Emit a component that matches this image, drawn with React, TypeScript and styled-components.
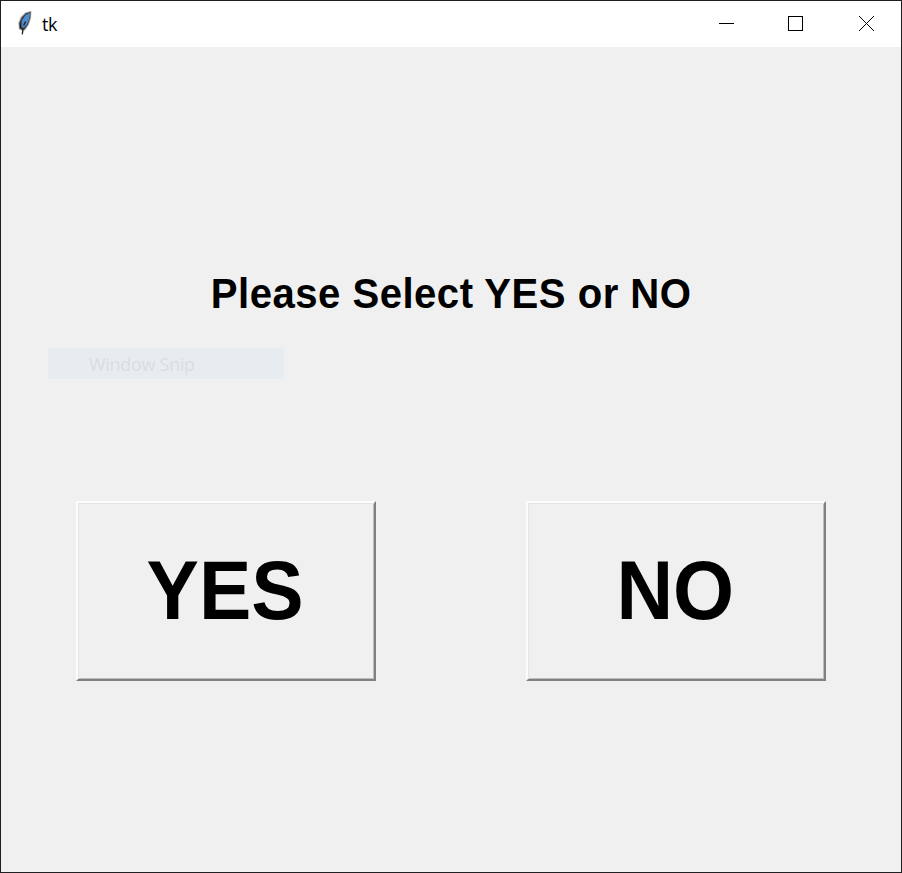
import React from "react";
import styled, { createGlobalStyle } from "styled-components";

const GlobalStyle = createGlobalStyle`
  * { box-sizing: border-box; }
  body { margin: 0; background: #202022; }
`;

const Window = styled.div`
  position: relative;
  display: flex;
  flex-direction: column;
  width: 902px;
  height: 873px;
  border: 1px solid #1f1f22;
  background: #f0f0f0;
  overflow: hidden;
`;

const TitleBar = styled.header`
  display: flex;
  align-items: center;
  height: 46px;
  flex: none;
  background: #fff;
`;

const Feather = styled.svg`
  width: 16px;
  height: 26px;
  margin: 0 9px 2px 16px;
  flex: none;
`;

const Title = styled.span`
  flex: 1;
  font: 18px/24px "Open Sans", "Noto Sans", sans-serif;
  letter-spacing: -0.3px;
  color: #000;
`;

const WindowControl = styled.button`
  display: flex;
  align-items: center;
  justify-content: center;
  width: 70px;
  height: 46px;
  padding: 0;
  border: 0;
  background: transparent;
`;

const ControlIcon = styled.svg`
  width: 16px;
  height: 16px;
  fill: none;
  stroke: #000;
`;

const Content = styled.main`
  display: flex;
  flex-direction: column;
  align-items: center;
  padding-top: 223px;
`;

const Heading = styled.h1`
  margin: 0;
  font: bold 42px/48px "Liberation Sans", Arial, sans-serif;
  letter-spacing: 0.5px;
  white-space: nowrap;
  color: #000;
  transform: translateX(0.5px) scaleX(0.955);
`;

const Choices = styled.div`
  display: flex;
  gap: 150px;
  margin-top: 183px;
`;

const Choice = styled.button`
  display: flex;
  align-items: center;
  justify-content: center;
  width: 300px;
  height: 180px;
  padding: 0 0 1px 0;
  border: solid;
  border-width: 2px;
  border-color: #fcfcfc #808080 #808080 #fcfcfc;
  background: #f0f0f0;
  box-shadow: inset 1px 1px #e5e5e5, inset -1px -1px #bdbdbd;
  font: bold 83px/96px "Liberation Sans", Arial, sans-serif;
  color: #000;
`;

const ChoiceLabel = styled.span`
  transform: translateX(-1px) scaleX(0.945);
`;

const SnipHint = styled.div`
  position: absolute;
  left: 47px;
  top: 347px;
  width: 236px;
  height: 31px;
  padding-left: 41px;
  background: #e7ecf0;
  font: 18px/33px "Open Sans", "Noto Sans", sans-serif;
  letter-spacing: -0.3px;
  color: #dcdddf;
`;

export default function App() {
  return (
    <>
      <GlobalStyle />
      <Window>
        <TitleBar>
          <Feather viewBox="0 0 16 26">
            <path d="M5 24 5.3 20.5 2 19.5 1.2 13 3.6 7 8 2.6 14.4 .8 14.2 8 12 14.5 8.5 20 6.5 21Z" fill="#b9b7b2" />
            <path d="M5.2 20 2.6 18.8 2.2 13 4.6 7.5 8.7 3.3 13.7 1.8 13.2 8 11 14.5 7.5 19.5Z" fill="#3b4046" />
            <path d="M4.2 16 5.2 10 8.7 5 12.9 2.7 12.3 8.5 10.2 13.8 6.7 18Z" fill="#4f8bd0" />
            <path d="M5.3 24.3 6 18.5M3.6 18V13.5M6.6 15.5 8.6 11.5" fill="none" stroke="#1a1d22" strokeWidth="1.3" />
          </Feather>
          <Title>tk</Title>
          <WindowControl aria-label="Minimize">
            <ControlIcon viewBox="0 0 16 16" shapeRendering="crispEdges">
              <path d="M1 7.5H16" />
            </ControlIcon>
          </WindowControl>
          <WindowControl aria-label="Maximize">
            <ControlIcon viewBox="0 0 16 16" shapeRendering="crispEdges">
              <path d="M.5 .5H14.5V14.5H.5Z" />
            </ControlIcon>
          </WindowControl>
          <WindowControl aria-label="Close">
            <ControlIcon viewBox="0 0 16 16">
              <path d="M1 0 16 15M16 0 1 15" />
            </ControlIcon>
          </WindowControl>
        </TitleBar>
        <Content>
          <Heading>Please Select YES or NO</Heading>
          <Choices>
            <Choice><ChoiceLabel>YES</ChoiceLabel></Choice>
            <Choice><ChoiceLabel>NO</ChoiceLabel></Choice>
          </Choices>
        </Content>
        <SnipHint>Window Snip</SnipHint>
      </Window>
    </>
  );
}
